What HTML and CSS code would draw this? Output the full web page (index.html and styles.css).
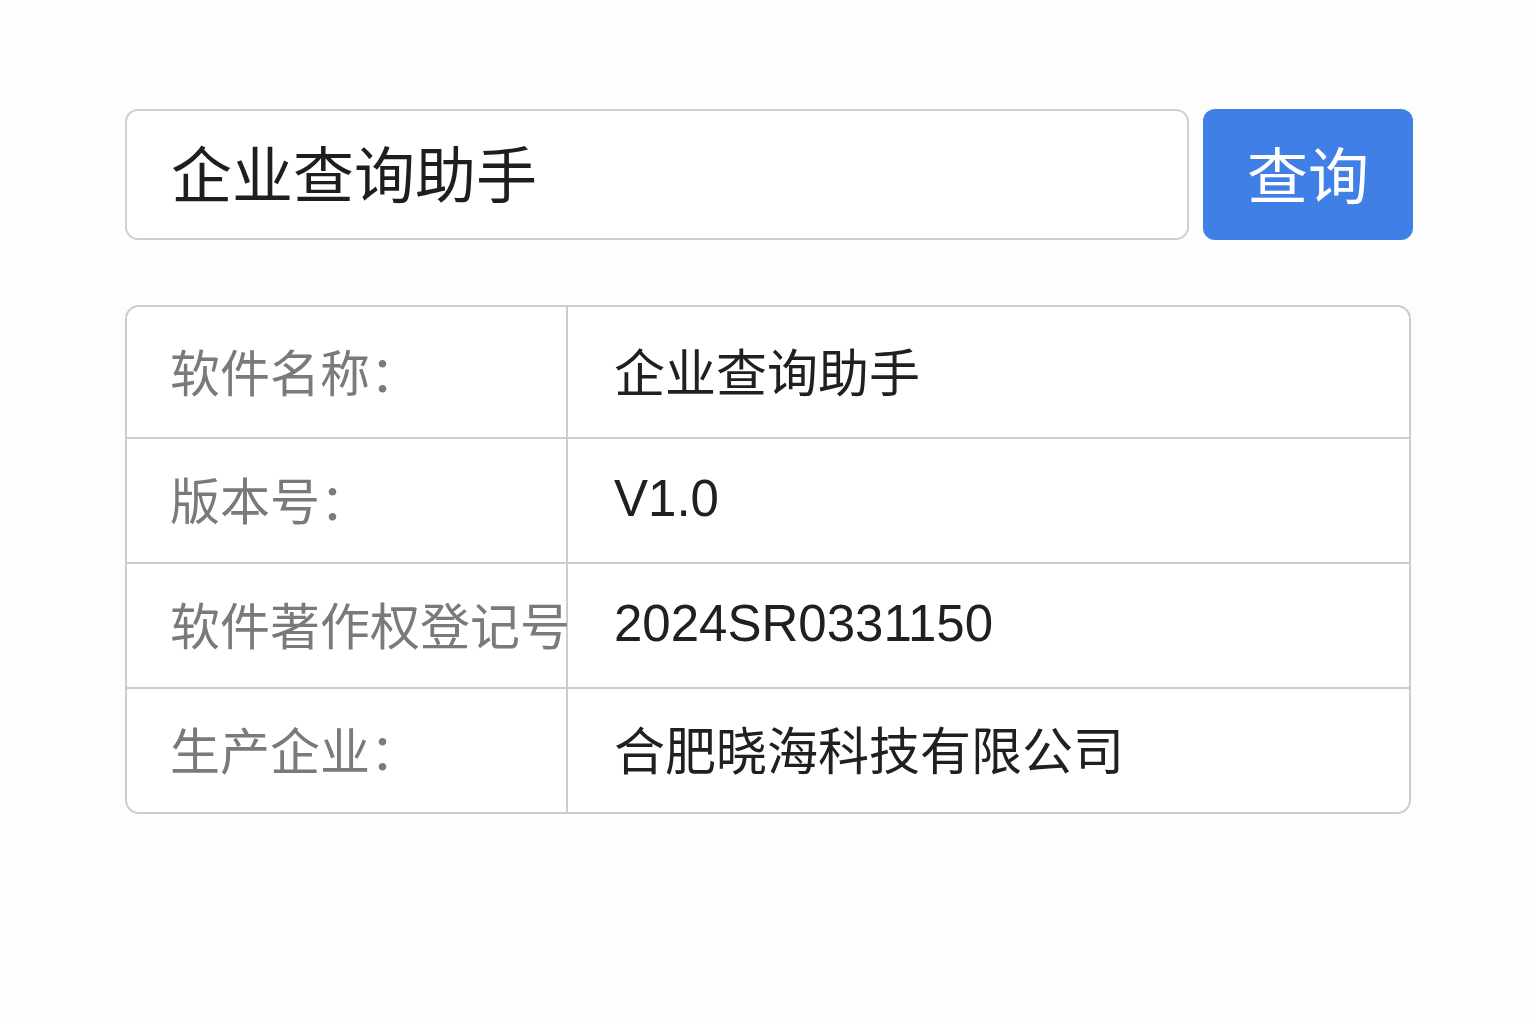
FILE: index.html
```html
<!DOCTYPE html>
<html lang="zh-CN">
<head>
<meta charset="utf-8">
<title>企业查询助手</title>
<link rel="stylesheet" href="styles.css">
</head>
<body>
<main class="page">
  <div class="search">
    <div class="search-input">企业查询助手</div>
    <button class="search-btn" type="button">查询</button>
  </div>
  <div class="info">
    <div class="row row-first">
      <div class="label">软件名称：</div>
      <div class="value">企业查询助手</div>
    </div>
    <div class="row">
      <div class="label">版本号：</div>
      <div class="value">V1.0</div>
    </div>
    <div class="row">
      <div class="label">软件著作权登记号</div>
      <div class="value">2024SR0331150</div>
    </div>
    <div class="row">
      <div class="label">生产企业：</div>
      <div class="value">合肥晓海科技有限公司</div>
    </div>
  </div>
</main>
</body>
</html>
```

FILE: styles.css
```css
html, body {
  margin: 0;
  padding: 0;
  background: #fdfdfd;
}

body {
  font-family: "Liberation Sans", "Noto Sans CJK SC", sans-serif;
}

.page {
  width: 1288px;
  padding: 109px 0 0 125px;
  display: flex;
  flex-direction: column;
  gap: 65px;
}

.search {
  display: flex;
  gap: 14px;
  height: 131px;
}

.search-input {
  flex: 1;
  box-sizing: border-box;
  border: 2px solid #cdd0d2;
  border-radius: 13px;
  background: #fff;
  display: flex;
  align-items: center;
  padding-left: 44px;
  padding-bottom: 6px;
  font-size: 61px;
  color: #1e1e1e;
  font-family: "Noto Sans CJK SC", sans-serif;
}

.search-btn {
  width: 210px;
  box-sizing: border-box;
  border: none;
  border-radius: 12px;
  background: #3f7fe6;
  color: #fff;
  font-size: 61px;
  font-family: "Noto Sans CJK SC", sans-serif;
  padding: 0 0 4px 0;
}

.info {
  width: 1286px;
  box-sizing: border-box;
  border: 2px solid #c9cdd0;
  border-radius: 14px;
  background: #fff;
  overflow: hidden;
}

.row {
  display: flex;
  height: 123px;
  border-top: 2px solid #c9cdd0;
}

.row-first {
  height: 130px;
  border-top: none;
}

.label {
  width: 441px;
  flex: none;
  box-sizing: border-box;
  border-right: 2px solid #c9cdd0;
  display: flex;
  align-items: center;
  padding-left: 43px;
  padding-bottom: 5px;
  font-size: 50px;
  color: #7a7a7a;
  white-space: nowrap;
  font-family: "Noto Sans CJK SC", sans-serif;
  position: relative;
  z-index: 1;
}

.value {
  flex: 1;
  display: flex;
  align-items: center;
  padding-left: 46px;
  padding-bottom: 5px;
  font-size: 51px;
  color: #202020;
  white-space: nowrap;
}
```
